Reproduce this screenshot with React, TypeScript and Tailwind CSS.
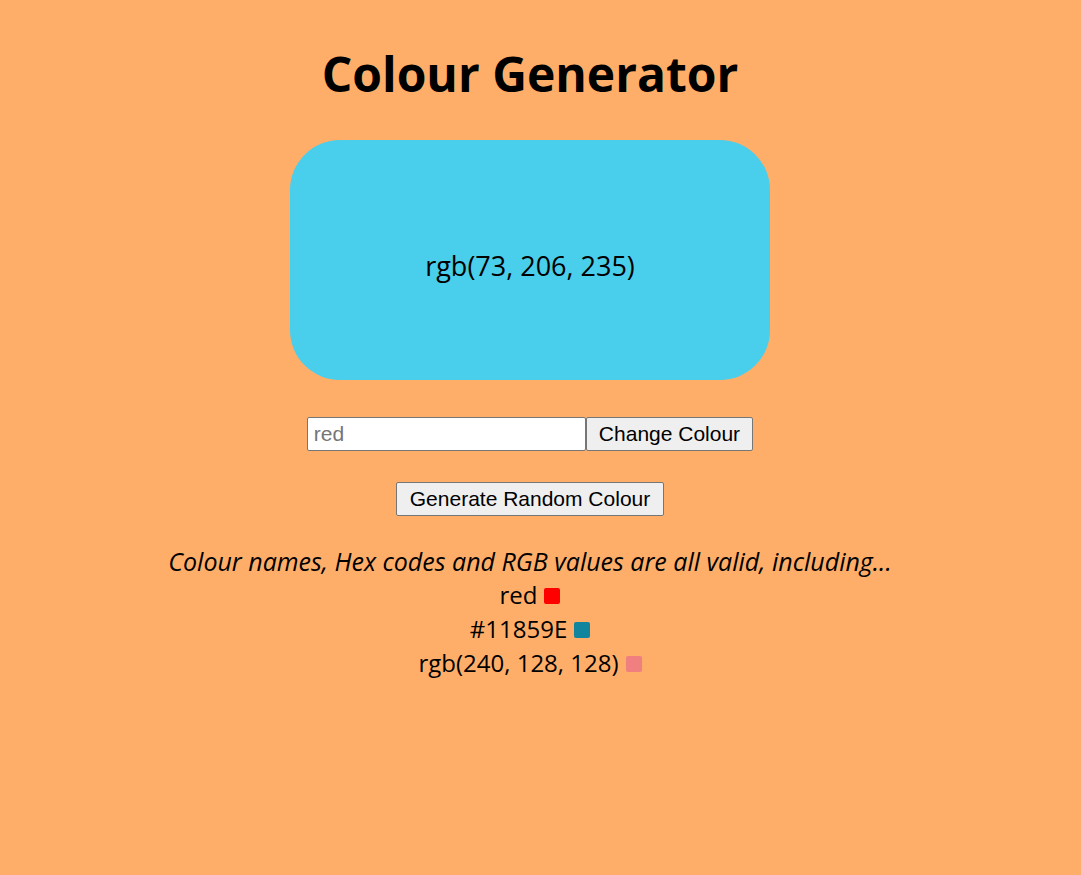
import { useState } from "react";

const examples = [
  { label: "red", colour: "#ff0000" },
  { label: "#11859E", colour: "#11859E" },
  { label: "rgb(240, 128, 128)", colour: "rgb(240, 128, 128)" },
];

export default function App() {
  const [value, setValue] = useState("");
  const [colour] = useState("rgb(73, 206, 235)");

  return (
    <div className="min-h-[875px] w-full bg-[#ffae69] text-black font-['Open_Sans',sans-serif] pr-[21px]">
      <div className="flex flex-col items-center pt-[38px]">
        <h1 className="text-[48px] leading-[72px] font-bold">Colour Generator</h1>

        <div
          className="mt-[30px] w-[480px] h-[240px] rounded-[50px] flex items-center justify-center pt-[12px]"
          style={{ backgroundColor: colour }}
        >
          <span className="text-[27px]">{colour}</span>
        </div>

        <div className="mt-[37px] flex font-['Liberation_Sans',sans-serif] text-[21px]">
          <input
            type="text"
            placeholder="red"
            value={value}
            onChange={(e) => setValue(e.target.value)}
            className="w-[279px] h-[34px] bg-white border border-[#767676] rounded-[2px] px-[6px] placeholder:text-[#757575] outline-none"
          />
          <button className="h-[34px] px-[12px] bg-[#efefef] border border-[#767676] rounded-[2px]">
            Change Colour
          </button>
        </div>

        <button className="mt-[31px] h-[34px] px-[13px] bg-[#efefef] border border-[#767676] rounded-[2px] font-['Liberation_Sans',sans-serif] text-[21px]">
          Generate Random Colour
        </button>

        <p className="mt-[28px] text-[25px] italic leading-[34px]">
          Colour names, Hex codes and RGB values are all valid, including...
        </p>
        {examples.map((ex) => (
          <div key={ex.label} className="flex items-center gap-[7px] text-[24px] leading-[34px]">
            <span>{ex.label}</span>
            <span className="w-[16px] h-[16px] rounded-[2px] mt-[2px]" style={{ backgroundColor: ex.colour }} />
          </div>
        ))}
      </div>
    </div>
  );
}
